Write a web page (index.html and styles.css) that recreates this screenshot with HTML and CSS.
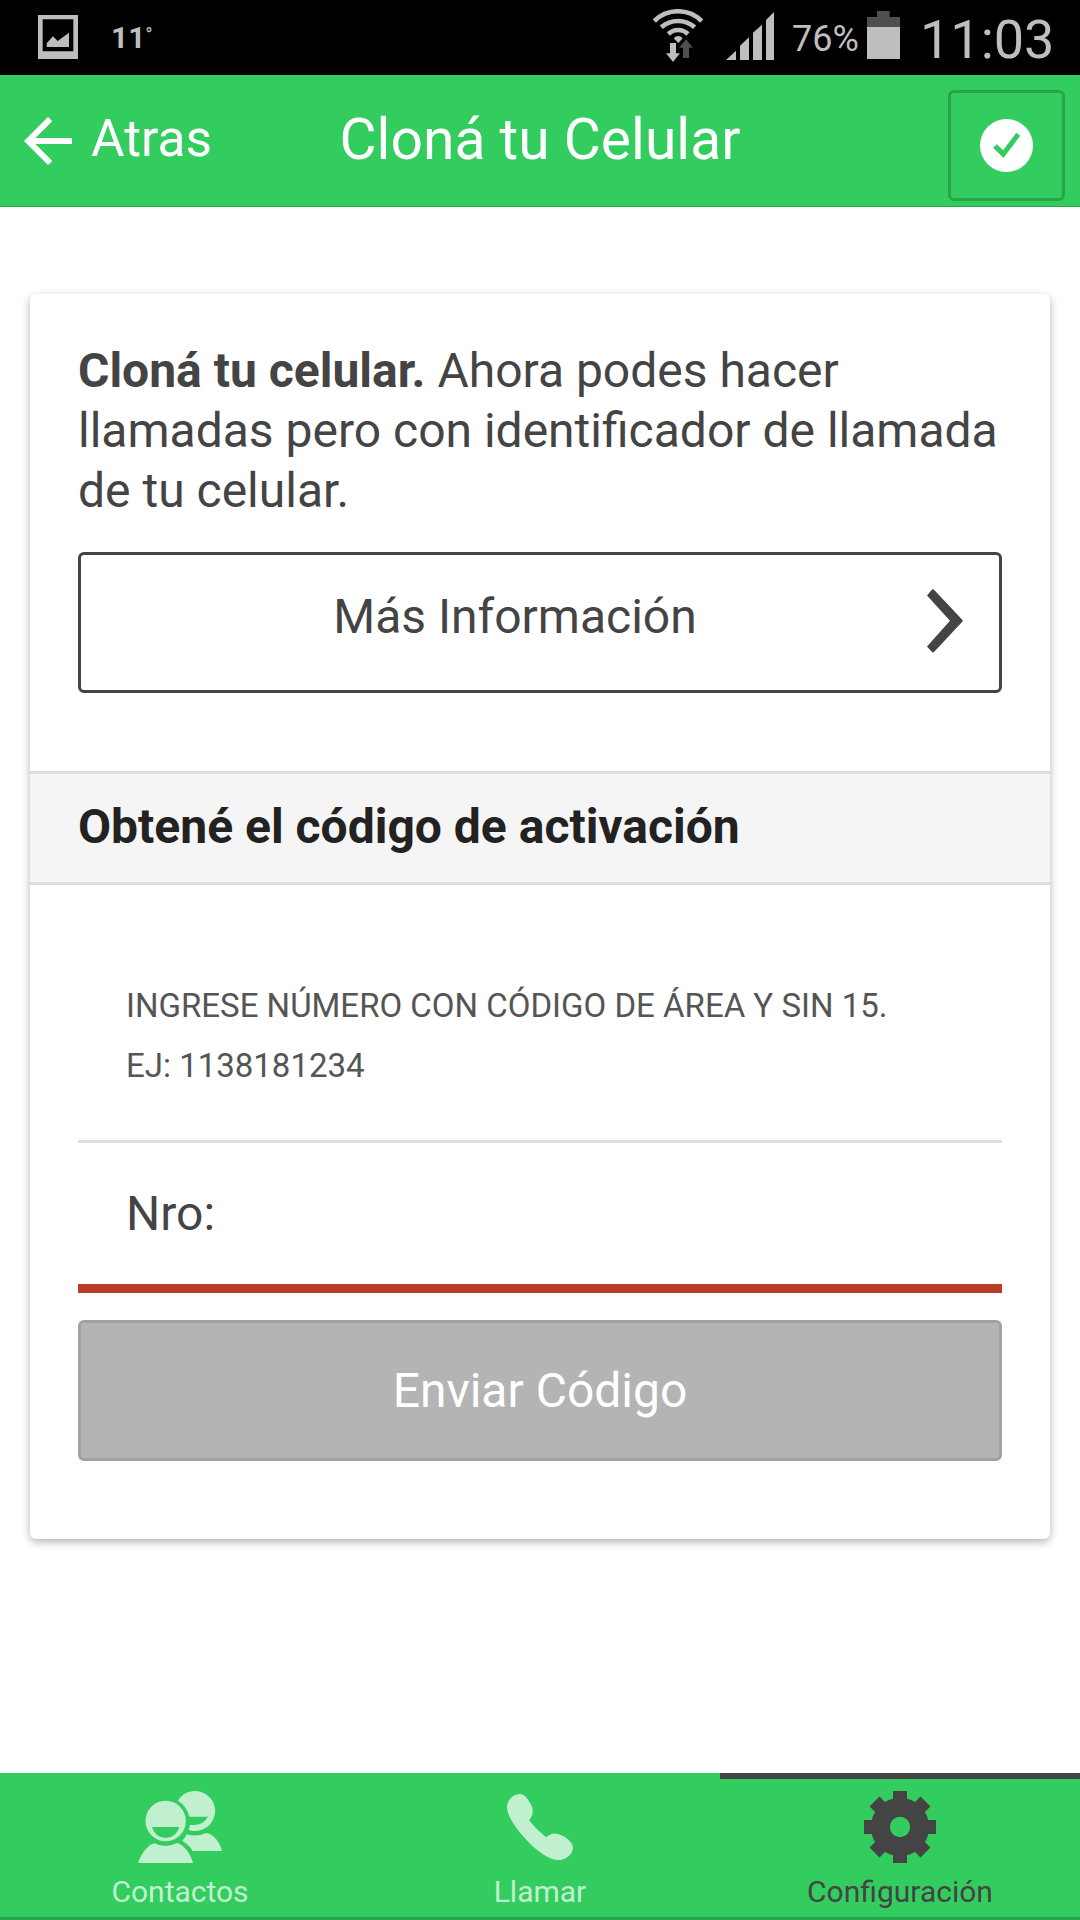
FILE: index.html
```html
<!DOCTYPE html>
<html lang="es">
<head>
<meta charset="utf-8">
<title>Cloná tu Celular</title>
<link rel="stylesheet" href="styles.css">
</head>
<body>
<div class="status-bar">
  <svg class="status-picture" viewBox="114 45 120 132"><path fill="#bebebe" fill-rule="evenodd" d="M114 45H234V177H114ZM128 58V154H220V58Z"/><path fill="#bebebe" d="M140 141V130L159 109L173 123L207 98V141Z"/></svg>
  <span class="status-temp">11<span class="degree">°</span></span>
  <div class="status-right">
    <svg class="status-wifi" viewBox="39 27 150 159">
      <g fill="none" stroke="#bebebe" stroke-width="14"><path d="M43 63A101 101 0 0 1 185 63"/><path d="M64 82A75 75 0 0 1 164 82"/><path d="M85 102A42 42 0 0 1 144 102"/></g>
      <path fill="#bebebe" d="M101 115Q114 101 128 115L115 129ZM90 129H108V160H120L99 186L78 160H90Z"/>
      <path fill="#4f4f4f" d="M138 118L159 143H147V174H129V143H117Z"/>
    </svg>
    <svg class="status-signal" viewBox="258 36 144 144"><path fill="#bebebe" d="M258 180L288 152V180ZM300 180V137L327 112V180ZM339 180V98L366 74V180ZM378 180V60L402 36V180Z"/></svg>
    <span class="status-percent">76%</span>
    <svg class="status-battery" viewBox="681 33 99 144"><path fill="#4f4f4f" d="M711 33H749V51H780V81H681V51H711Z"/><path fill="#bebebe" d="M681 81H780V177H681Z"/></svg>
    <span class="status-time">11:03</span>
  </div>
</div>

<header class="nav-bar">
  <a class="back"><svg class="back-icon" viewBox="72 351 144 144"><path fill="#fff" d="M144 351L157 364L106 414H216V432H106L157 483L144 495L72 423Z"/></svg><span>Atras</span></a>
  <h1 class="nav-title">Cloná tu Celular</h1>
  <button class="confirm"><svg class="confirm-icon" viewBox="1018 358 158 158"><path fill="#fff" fill-rule="evenodd" d="M1097 358A79 79 0 1 0 1097 516A79 79 0 1 0 1097 358ZM1057 444L1068 433L1087 451L1126 399L1138 408L1088 474Z"/></svg></button>
</header>

<main class="content">
  <section class="card">
    <div class="intro">
      <p class="intro-text"><b>Cloná tu celular.</b> Ahora podes hacer llamadas pero con identificador de llamada de tu celular.</p>
      <button class="button info"><span>Más Información</span><svg class="chevron" viewBox="0 0 36 64"><path fill="#444" d="M0 6.5L5 .6Q6 0 7 .8L35.5 31Q36 31.800 35.500 32.500L7 63Q6 63.800 5 63L0 57.500L23 31.800Z"/></svg></button>
    </div>
    <h2 class="divider">Obtené el código de activación</h2>
    <div class="form">
      <p class="hint">INGRESE NÚMERO CON CÓDIGO DE ÁREA Y SIN 15.<br>EJ: 1138181234</p>
      <label class="field">Nro:</label>
      <button class="button send">Enviar Código</button>
    </div>
  </section>
</main>

<nav class="tabs">
  <a class="tab">
    <svg class="icon-contacts" viewBox="174 93 252 216"><path fill="currentColor" fill-rule="evenodd" d="M257 122.500A60.500 60.500 0 1 0 257 243.500A60.500 60.500 0 1 0 257 122.500ZM216 201H298A42 42 0 0 1 216 201Z"/><path fill="currentColor" d="M174 309C183 282 205 252 224 250Q256 267 291 249C313 255 333 283 339 309ZM294 122A60 60 0 1 1 326 210L330 194Q367 200 384 170H328Q320 138 294 122ZM306 242Q316 234 320 223Q350 232 378 219C402 222 420 248 426 273H338Q326 252 306 242Z"/></svg>
    <span>Contactos</span>
  </a>
  <a class="tab">
    <svg class="icon-phone" viewBox="141 102 198 198"><path fill="currentColor" d="M141 142C141 122 159 102 178 102C197 102 204 120 212 132C222 148 220 166 207 181Q228 208 258 232Q276 218 288 221C310 224 339 243 339 263C339 282 318 300 296 300C270 300 232 276 196 236C165 202 141 165 141 142Z"/></svg>
    <span>Llamar</span>
  </a>
  <a class="tab active">
    <svg class="icon-gear" viewBox="-108 -108 216 216"><circle r="59" fill="none" stroke="currentColor" stroke-width="57"/><g fill="currentColor"><path id="teeth" d="M-21-108H21V-70H-21ZM-21 70H21V108H-21ZM-108-21H-70V21H-108ZM70-21H108V21H70Z"/><use href="#teeth" transform="rotate(45)"/></g></svg>
    <span>Configuración</span>
  </a>
</nav>
</body>
</html>
```
FILE: styles.css
```css
* { box-sizing: border-box; margin: 0; padding: 0; }

body {
  width: 1080px;
  height: 1920px;
  display: flex;
  flex-direction: column;
  overflow: hidden;
  background: #fff;
  color: #444;
  font: 48px/60px Roboto, sans-serif;
}

svg { display: block; flex: none; }
button { font: inherit; }

.status-bar {
  height: 75px;
  flex: none;
  display: flex;
  align-items: flex-start;
  padding: 0 31px 0 38px;
  background: #000;
  color: #bebebe;
}
.status-picture { width: 40px; height: 44px; margin-top: 15px; }
.status-temp { display: flex; margin: 8px 0 0 33px; font-size: 30px; font-weight: 700; }
.degree { font-size: 18px; line-height: 54px; }
.status-right { display: flex; margin-left: auto; }
.status-wifi { width: 50px; height: 53px; margin-top: 9px; }
.status-signal { width: 48px; height: 48px; margin: 12px 0 0 23px; }
.status-percent { margin: 9px 0 0 18px; width: 66px; font-size: 36px; }
.status-battery { width: 33px; height: 48px; margin: 11px 0 0 9px; }
.status-time { width: 129px; margin: 10px 0 0 20px; font-size: 54px; white-space: nowrap; }

.nav-bar {
  height: 132px;
  flex: none;
  display: grid;
  grid-template-columns: 300px 1fr 300px;
  padding: 15px 15px 0;
  background: #33cd5f;
  border-bottom: 1px solid #28a54c;
  color: #fff;
}
.back { display: flex; align-items: flex-start; padding: 18px 0 0 9px; font-size: 51.500px; }
.back span { margin-top: 1px; }
.back-icon { width: 48px; height: 48px; margin: 9px 19px 0 0; }
.nav-title { padding-top: 20px; text-align: center; font-size: 57px; font-weight: 400; white-space: nowrap; }
.confirm {
  width: 117px;
  height: 111px;
  justify-self: end;
  display: grid;
  place-items: center;
  padding-right: 1px;
  background: none;
  border: 3px solid #28a54c;
  border-radius: 6px;
}
.confirm-icon { width: 53px; height: 53px; }

.content { flex: 1; padding: 87px 30px 0; }
.card {
  height: 1245px;
  background: #fff;
  border-radius: 6px;
  box-shadow: 0 3px 9px rgba(0, 0, 0, .3);
}
.intro { padding: 47px 48px 78px; }
.intro-text { margin-bottom: 31px; }
.button {
  width: 100%;
  height: 141px;
  display: flex;
  align-items: center;
  justify-content: center;
  border: 3px solid #444;
  border-radius: 6px;
  color: #444;
  background: none;
}
.info { padding: 0 36px; }
.info span { flex: 1; margin-top: -12px; padding-right: 14px; }
.chevron { width: 36px; height: 64px; margin-top: -3px; }
.divider {
  height: 114px;
  padding: 23px 48px 0;
  border: solid #ddd;
  border-width: 3px 0;
  background: #f5f5f5;
  color: #222;
  font-size: 48px;
  font-weight: 700;
}
.form { padding: 0 48px; }
.hint {
  height: 258px;
  padding: 91px 48px 0;
  border-bottom: 3px solid #ddd;
  color: #555;
  font-size: 33px;
}
.field {
  display: block;
  height: 150px;
  margin-bottom: 27px;
  padding: 41px 48px 0;
  border-bottom: 9px solid #b83c2a;
}
.send { border-color: #a1a1a1; background: #b4b4b4; color: #fff; }

.tabs {
  height: 147px;
  flex: none;
  display: grid;
  grid-template-columns: repeat(3, 1fr);
  background: #33cd5f;
  border-bottom: 3px solid #28a54c;
}
.tab {
  display: flex;
  flex-direction: column;
  align-items: center;
  padding-top: 18px;
  color: #c1f0cf;
  font-size: 30px;
  line-height: 42px;
}
.tab span { margin-top: 8px; }
.tab.active { padding-top: 12px; border-top: 6px solid #444; color: #444; }
.icon-contacts { width: 84px; height: 72px; }
.icon-phone { width: 66px; height: 66px; margin: 3px 0; }
.icon-gear { width: 72px; height: 72px; }
```
